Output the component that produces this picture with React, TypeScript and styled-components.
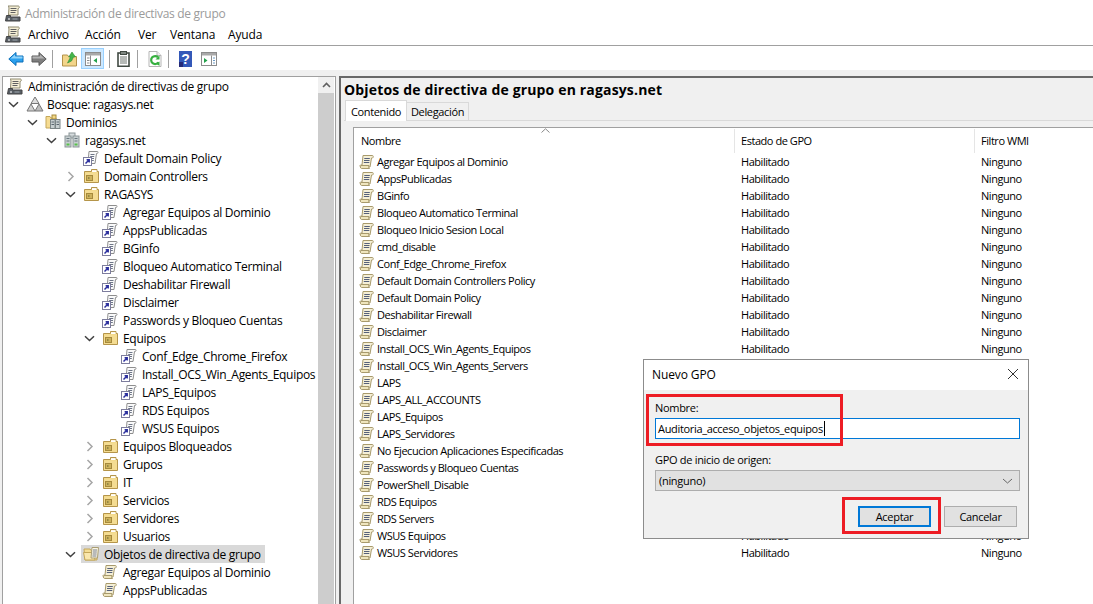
import React from "react";
import styled, { createGlobalStyle } from "styled-components";

const Global = createGlobalStyle`
  html, body { margin: 0; padding: 0; background: #fff; }
  * { box-sizing: border-box; }
`;

const Window = styled.div`
  position: relative;
  width: 1093px;
  height: 604px;
  overflow: hidden;
  display: flex;
  flex-direction: column;
  background: #fff;
  font-family: "Open Sans", "Noto Sans", sans-serif;
  color: #000;
`;
const TitleBar = styled.div`
  height: 24px;
  flex: none;
  display: flex;
  align-items: center;
  gap: 4px;
  padding: 2px 0 0 5px;
  font-size: 12px;
  letter-spacing: -0.31px;
  color: #9b9b9b;
`;
const MenuBar = styled.div`
  height: 22px;
  flex: none;
  display: flex;
  align-items: center;
  padding-left: 5px;
  font-size: 12px;
  letter-spacing: -0.15px;
  border-bottom: 1px solid #a0a0a0;
`;
const MenuIcon = styled.div`
  display: flex;
  margin-right: 7px;
`;
const MenuItem = styled.span<{ $w: number }>`
  width: ${(p) => p.$w}px;
`;
const ToolBar = styled.div`
  height: 24px;
  flex: none;
  display: flex;
  align-items: center;
  padding: 1px 0 0 4px;
`;
const ToolButton = styled.div<{ $active?: boolean }>`
  width: 23px;
  height: 21px;
  display: flex;
  align-items: center;
  justify-content: center;
  background: ${(p) => (p.$active ? "#cce8ff" : "transparent")};
  border: 1px solid ${(p) => (p.$active ? "#99d1ff" : "transparent")};
`;
const ToolSep = styled.div<{ $l: number; $r: number }>`
  width: 1px;
  height: 18px;
  background: #a0a0a0;
  margin: 0 ${(p) => p.$r}px 0 ${(p) => p.$l}px;
`;
const Workspace = styled.div`
  flex: 1;
  min-height: 0;
  display: flex;
  background: #f0f0f0;
  padding: 6px 0 0 2px;
`;
const TreePanel = styled.div`
  width: 334px;
  flex: none;
  display: flex;
  background: #fff;
  border-left: 1px solid #a0a0a0;
  border-top: 1px solid #a0a0a0;
  border-right: 1px solid #a0a0a0;
`;
const Tree = styled.div`
  flex: 1;
  min-width: 0;
  overflow: hidden;
`;
const TreeRow = styled.div<{ $level: number }>`
  height: 18px;
  display: flex;
  align-items: center;
  padding-left: ${(p) => 4 + p.$level * 19}px;
  font-size: 12px;
  letter-spacing: -0.3px;
  white-space: nowrap;
`;
const Chevron = styled.div`
  width: 19px;
  height: 18px;
  flex: none;
  display: flex;
  align-items: center;
  padding-left: 1px;
`;
const RowIcon = styled.div`
  width: 21px;
  height: 16px;
  flex: none;
  display: flex;
  align-items: center;
`;
const RowEntry = styled.div<{ $selected?: boolean }>`
  display: flex;
  align-items: center;
  height: 18px;
  margin-left: ${(p) => (p.$selected ? "-2px" : "0")};
  padding: ${(p) => (p.$selected ? "0 4px 0 2px" : "0")};
  background: ${(p) => (p.$selected ? "#d9d9d9" : "transparent")};
`;
const Scrollbar = styled.div`
  width: 16px;
  flex: none;
  margin-right: 1px;
  background: #cdcdcd;
`;
const ScrollUp = styled.div`
  height: 16px;
  background: #f0f0f0;
  display: flex;
  align-items: center;
  justify-content: center;
`;
const Splitter = styled.div`
  width: 3px;
  flex: none;
`;
const DetailPanel = styled.div`
  flex: 1;
  min-width: 0;
  display: flex;
  flex-direction: column;
  background: #f0f0f0;
  border-left: 2px solid #696969;
  border-top: 2px solid #696969;
  padding-left: 3px;
`;
const Heading = styled.div`
  height: 22px;
  flex: none;
  display: flex;
  align-items: center;
  font-size: 14px;
  font-weight: 700;
  letter-spacing: 0.16px;
  white-space: nowrap;
`;
const TabStrip = styled.div`
  height: 21px;
  flex: none;
  display: flex;
  align-items: flex-end;
  padding-left: 1px;
  border-bottom: 1px solid #d9d9d9;
  font-size: 11px;
  letter-spacing: -0.35px;
`;
const Tab = styled.div<{ $active?: boolean }>`
  height: ${(p) => (p.$active ? 21 : 19)}px;
  width: 62px;
  margin-bottom: -1px;
  display: flex;
  align-items: center;
  justify-content: center;
  background: ${(p) => (p.$active ? "#fff" : "#f0f0f0")};
  border: 1px solid #d9d9d9;
  border-bottom: ${(p) => (p.$active ? "0" : "1px solid #d9d9d9")};
  border-left: ${(p) => (p.$active ? "1px solid #d9d9d9" : "0")};
`;
const TabBody = styled.div`
  flex: 1;
  min-height: 0;
  padding: 6px 0 0 9px;
  background: #f0f0f0;
`;
const ListBox = styled.div`
  height: 100%;
  background: #fff;
  border-left: 1px solid #a0a0a0;
  border-top: 1px solid #a0a0a0;
  font-size: 11px;
  letter-spacing: -0.45px;
  overflow: hidden;
`;
const Columns = "380px 240px 1fr";
const HeaderRow = styled.div`
  position: relative;
  height: 25px;
  display: grid;
  grid-template-columns: ${Columns};
`;
const HeaderCell = styled.div<{ $sep?: boolean }>`
  display: flex;
  align-items: flex-end;
  padding: 0 0 5px ${(p) => (p.$sep ? 6 : 6)}px;
  height: 24px;
  margin-top: 1px;
  border-left: 1px solid ${(p) => (p.$sep ? "#e5e5e5" : "transparent")};
`;
const SortMark = styled.div`
  position: absolute;
  left: 187px;
  top: 0;
  display: flex;
`;
const ListRow = styled.div`
  height: 17px;
  display: grid;
  grid-template-columns: ${Columns};
  align-items: center;
  white-space: nowrap;
`;
const NameCell = styled.div`
  display: flex;
  align-items: center;
  padding-left: 5px;
  gap: 2px;
`;
const Cell = styled.div`
  padding-left: 7px;
`;
const Dialog = styled.div`
  position: absolute;
  left: 643px;
  top: 359px;
  width: 386px;
  height: 180px;
  background: #f0f0f0;
  border: 1px solid #8c8c8c;
  display: flex;
  flex-direction: column;
  font-size: 11px;
  letter-spacing: -0.3px;
`;
const DialogTitle = styled.div`
  height: 30px;
  flex: none;
  background: #fff;
  display: flex;
  align-items: center;
  justify-content: space-between;
  padding: 0 9px 2px 8px;
  font-size: 12px;
  letter-spacing: -0.1px;
`;
const DialogBody = styled.div`
  flex: 1;
  padding: 9px 8px 0 11px;
  display: flex;
  flex-direction: column;
`;
const FieldLabel = styled.div<{ $gap?: number }>`
  height: 16px;
  margin-top: ${(p) => p.$gap ?? 0}px;
  display: flex;
  align-items: center;
`;
const NameInput = styled.div`
  height: 21px;
  margin-top: 3px;
  background: #fff;
  border: 1px solid #0078d7;
  display: flex;
  align-items: center;
  padding-left: 2px;
  letter-spacing: -0.33px;
`;
const Caret = styled.span`
  width: 1px;
  height: 15px;
  background: #000;
  margin-left: 1px;
`;
const Select = styled.div`
  height: 21px;
  margin-top: 3px;
  background: #e1e1e1;
  border: 1px solid #adadad;
  display: flex;
  align-items: center;
  justify-content: space-between;
  padding: 0 6px 0 3px;
`;
const ButtonRow = styled.div`
  display: flex;
  justify-content: flex-end;
  gap: 13px;
  margin-top: 15px;
  padding-right: 3px;
`;
const Button = styled.div<{ $primary?: boolean }>`
  width: 73px;
  height: 21px;
  background: #e1e1e1;
  border: ${(p) => (p.$primary ? "2px solid #0078d7" : "1px solid #adadad")};
  display: flex;
  align-items: center;
  justify-content: center;
`;
const Highlight = styled.div<{ $l: number; $t: number; $w: number; $h: number }>`
  position: absolute;
  left: ${(p) => p.$l}px;
  top: ${(p) => p.$t}px;
  width: ${(p) => p.$w}px;
  height: ${(p) => p.$h}px;
  border: 3px solid #ed1c24;
  pointer-events: none;
`;

const ChevronDown = () => (
  <svg width="11" height="7" viewBox="0 0 11 7"><path d="M1 1.2 5.5 5.5 10 1.2" fill="none" stroke="#404040" strokeWidth="1.5" /></svg>
);
const ChevronRight = () => (
  <svg width="11" height="11" viewBox="0 0 11 11"><path d="M3.5 1 8 5.5 3.5 10" fill="none" stroke="#a6a6a6" strokeWidth="1.5" /></svg>
);

const ScrollIcon = () => (
  <svg width="16" height="16" viewBox="0 0 16 16">
    <path d="M4 1.5h9.5c1 0 1 2 0 2.5H12.5L11 13H2.5c-1.5 0-2-1.5-1-2H3Z" fill="#f5efd6" stroke="#a89a6c" />
    <path d="M2 11.5h8c-.5 1-.5 2.5.5 3H2.5c-1.5-.5-1.5-2.5-.5-3Z" fill="#efe5bd" stroke="#a89a6c" />
    <path d="M5.3 4.5h5.5M5 6.5h5.5M4.8 8.5h5.5" stroke="#55607a" strokeWidth="1" />
  </svg>
);
const LinkIcon = () => (
  <svg width="16" height="16" viewBox="0 0 16 16">
    <path d="M6 1.5h8.5c.8 0 .6 1.8-.2 2H13.5L12 13.5H5Z" fill="#fafafa" stroke="#8e8e8e" />
    <path d="M7.5 4.5h4M7.2 6.5h4M7 8.5h4M6.8 10.5h4" stroke="#6e7687" />
    <rect x="0.5" y="7.5" width="8" height="8" fill="#fff" stroke="#7d7d9d" />
    <path d="M2.5 13.5 6 10M3.6 9.8H6.2V12.4" fill="none" stroke="#2b2f9e" strokeWidth="1.5" />
  </svg>
);
const OuIcon = () => (
  <svg width="16" height="16" viewBox="0 0 16 16">
    <path d="M1.5 3.5h7V1.5h5.5v2h1.5v11h-14Z" fill="#f2d887" stroke="#b5954a" />
    <path d="M9 2.2h4.5v1.8H9Z" fill="#fff" />
    <rect x="2" y="4.5" width="13" height="9.5" fill="#f4dc92" />
    <rect x="3.5" y="7.5" width="6" height="5" fill="#cdb25c" stroke="#a68a3c" />
    <path d="M5 10h1.5" stroke="#5d5d2d" />
  </svg>
);
const GpoFolderIcon = () => (
  <svg width="17" height="16" viewBox="0 0 17 16">
    <path d="M1 3h6l1 1.5h6V14H2Z" fill="#f5dd94" stroke="#c4a75a" />
    <path d="M.5 6.5h10L12 14H2Z" fill="#fae7ad" stroke="#c4a75a" />
    <path d="M9 1.5h6.5L14.5 12H8Z" fill="#fbf6e1" stroke="#a99d74" />
    <path d="M10 4h4M9.8 6h4M9.6 8h4M9.4 10h4" stroke="#767f93" />
  </svg>
);
const ForestIcon = () => (
  <svg width="18" height="16" viewBox="0 0 18 16">
    <path d="M9 1 13 7.5H5Z" fill="#dedede" stroke="#777" />
    <path d="M5 8 9 15H1Z" fill="#d0d0d0" stroke="#777" />
    <path d="M13 8 17 15H9Z" fill="#bdbdbd" stroke="#777" />
  </svg>
);
const Building = ({ x }: { x: number }) => (
  <g>
    <rect x={x} y="4" width="6" height="11" fill="#c7cfd1" stroke="#8b9597" />
    <path d={`M${x + 1.5} 6.5h3M${x + 1.5} 9h3`} stroke="#6b7880" />
    <rect x={x + 1.5} y="11.5" width="3" height="2" fill="#59c24b" />
  </g>
);
const DomainIcon = () => (
  <svg width="16" height="16" viewBox="0 0 16 16">
    <rect x="5" y="1" width="6" height="5" fill="#d6dcde" stroke="#8b9597" />
    <Building x={1} />
    <Building x={9} />
  </svg>
);
const DomainFolderIcon = () => (
  <svg width="16" height="16" viewBox="0 0 16 16">
    <path d="M1 2.5h4l1 1.5h5v10H1Z" fill="#f6dc92" stroke="#c4a75a" />
    <rect x="7" y="1" width="4" height="4" fill="#f2d887" stroke="#a68a3c" />
    <rect x="5.5" y="5.5" width="4.5" height="9" fill="#c7cfd1" stroke="#7b8587" />
    <rect x="10.5" y="5.5" width="4.5" height="9" fill="#c7cfd1" stroke="#7b8587" />
    <path d="M6.5 8h2.5M11.5 8h2.5M6.5 10.5h2.5M11.5 10.5h2.5" stroke="#5a6670" />
  </svg>
);
const ConsoleIcon = () => (
  <svg width="16" height="17" viewBox="0 0 16 17">
    <path d="M3 1h10.5c1 0 1 2.2 0 2.5H13V10H3.5L4 3C4 2 3.5 1.2 3 1Z" fill="#f5efd6" stroke="#8f8a70" />
    <path d="M5.5 3.5h6M5.5 5.5h6M5.5 7.5h5" stroke="#606060" />
    <path d="M1.5 10.5h4V12H15v4H.5Z" fill="#585f66" stroke="#444" />
    <path d="M3 14h2" stroke="#fff" />
    <path d="M7.5 14h5" stroke="#9ea6ab" />
  </svg>
);
const BackArrow = () => (
  <svg width="16" height="14" viewBox="0 0 16 14">
    <path d="M8 .5.8 7 8 13.5V10h7V4H8Z" fill="#2aa0ee" stroke="#0d6fb8" />
    <path d="M7 2.5 2.5 6.5H14.5V4.5H7Z" fill="#8fd3fa" />
  </svg>
);
const ForwardArrow = () => (
  <svg width="16" height="14" viewBox="0 0 16 14">
    <path d="M8 .5 15.2 7 8 13.5V10H1V4h7Z" fill="#7f7f7f" stroke="#5a5a5a" />
    <path d="M9 2.5 13.5 6.5H1.5V4.5H9Z" fill="#b4b4b4" />
  </svg>
);
const UpFolder = () => (
  <svg width="15" height="16" viewBox="0 0 15 16">
    <path d="M.5 4h5l1 1.5h8V15H.5Z" fill="#f3d58a" stroke="#b4934a" />
    <path d="M5.5 12 8.5 6H6.7L10 1l3.5 5h-2L9.5 10Z" fill="#45b64a" stroke="#2c8c35" strokeWidth=".6" />
  </svg>
);
const PaneIcon = ({ flip }: { flip?: boolean }) => (
  <svg width="16" height="14" viewBox="0 0 16 14">
    <rect x=".5" y=".5" width="15" height="13" fill="#fff" stroke="#8c8c8c" />
    <rect x="1" y="1" width="14" height="2.5" fill="#a9a9a9" />
    {flip ? (
      <>
        <path d="M3 6v5l3.5-2.5Z" fill="#22a14a" />
        <path d="M10.5 3.5v10" stroke="#8c8c8c" />
        <path d="M12 6h2M12 8.5h2M12 11h2" stroke="#6a9ac4" />
      </>
    ) : (
      <>
        <path d="M2 6h2.5M2 8.5h2.5M2 11h2.5" stroke="#8c8c8c" />
        <path d="M5.5 3.5v10" stroke="#8c8c8c" />
        <path d="M12 6v5L8.5 8.5Z" fill="#22a14a" />
      </>
    )}
  </svg>
);
const Clipboard = () => (
  <svg width="13" height="16" viewBox="0 0 13 16">
    <rect x="1" y="2" width="11" height="13.3" fill="#fff" stroke="#414a43" strokeWidth="1.6" />
    <rect x="3.5" y=".5" width="6" height="3" fill="#7f8781" stroke="#414a43" />
    <path d="M3 6h7M3 8h7M3 10h7M3 12h7" stroke="#6f7670" />
  </svg>
);
const RefreshIcon = () => (
  <svg width="14" height="16" viewBox="0 0 14 16">
    <path d="M1 .5h8l4 4v11H1Z" fill="#fff" stroke="#b5b5b5" />
    <path d="M9 .5v4h4" fill="#eee" stroke="#b5b5b5" />
    <path d="M10.4 11.4a4 4 0 1 1-.4-5.2" fill="none" stroke="#36b03f" strokeWidth="2.2" />
    <path d="M11.5 4.5v4h-4Z" fill="#36b03f" />
    <path d="M8 12.5l3.5 2.5v-4.5Z" fill="#36b03f" />
  </svg>
);
const HelpIcon = () => (
  <svg width="14" height="16" viewBox="0 0 14 16">
    <rect x="0" y="0" width="13" height="16" fill="#3358b8" />
    <rect x="0" y="11" width="4" height="5" fill="#252a78" />
    <text x="6.5" y="13" textAnchor="middle" fontSize="14" fontWeight="700" fontFamily="Liberation Sans, sans-serif" fill="#fff">?</text>
  </svg>
);
const CloseIcon = () => (
  <svg width="12" height="12" viewBox="0 0 12 12"><path d="M1 1 11 11M11 1 1 11" stroke="#333" strokeWidth="1" /></svg>
);

type Kind = "console" | "forest" | "domfolder" | "domain" | "link" | "ou" | "gpofolder" | "scroll";
const icons: Record<Kind, React.ReactNode> = {
  console: <ConsoleIcon />,
  forest: <ForestIcon />,
  domfolder: <DomainFolderIcon />,
  domain: <DomainIcon />,
  link: <LinkIcon />,
  ou: <OuIcon />,
  gpofolder: <GpoFolderIcon />,
  scroll: <ScrollIcon />,
};

type Node = { level: number; kind: Kind; label: string; arrow?: "open" | "closed"; selected?: boolean };
const tree: Node[] = [
  { level: 0, kind: "forest", label: "Bosque: ragasys.net", arrow: "open" },
  { level: 1, kind: "domfolder", label: "Dominios", arrow: "open" },
  { level: 2, kind: "domain", label: "ragasys.net", arrow: "open" },
  { level: 3, kind: "link", label: "Default Domain Policy" },
  { level: 3, kind: "ou", label: "Domain Controllers", arrow: "closed" },
  { level: 3, kind: "ou", label: "RAGASYS", arrow: "open" },
  { level: 4, kind: "link", label: "Agregar Equipos al Dominio" },
  { level: 4, kind: "link", label: "AppsPublicadas" },
  { level: 4, kind: "link", label: "BGinfo" },
  { level: 4, kind: "link", label: "Bloqueo Automatico Terminal" },
  { level: 4, kind: "link", label: "Deshabilitar Firewall" },
  { level: 4, kind: "link", label: "Disclaimer" },
  { level: 4, kind: "link", label: "Passwords y Bloqueo Cuentas" },
  { level: 4, kind: "ou", label: "Equipos", arrow: "open" },
  { level: 5, kind: "link", label: "Conf_Edge_Chrome_Firefox" },
  { level: 5, kind: "link", label: "Install_OCS_Win_Agents_Equipos" },
  { level: 5, kind: "link", label: "LAPS_Equipos" },
  { level: 5, kind: "link", label: "RDS Equipos" },
  { level: 5, kind: "link", label: "WSUS Equipos" },
  { level: 4, kind: "ou", label: "Equipos Bloqueados", arrow: "closed" },
  { level: 4, kind: "ou", label: "Grupos", arrow: "closed" },
  { level: 4, kind: "ou", label: "IT", arrow: "closed" },
  { level: 4, kind: "ou", label: "Servicios", arrow: "closed" },
  { level: 4, kind: "ou", label: "Servidores", arrow: "closed" },
  { level: 4, kind: "ou", label: "Usuarios", arrow: "closed" },
  { level: 3, kind: "gpofolder", label: "Objetos de directiva de grupo", arrow: "open", selected: true },
  { level: 4, kind: "scroll", label: "Agregar Equipos al Dominio" },
  { level: 4, kind: "scroll", label: "AppsPublicadas" },
];

const gpos = [
  "Agregar Equipos al Dominio", "AppsPublicadas", "BGinfo", "Bloqueo Automatico Terminal",
  "Bloqueo Inicio Sesion Local", "cmd_disable", "Conf_Edge_Chrome_Firefox",
  "Default Domain Controllers Policy", "Default Domain Policy", "Deshabilitar Firewall", "Disclaimer",
  "Install_OCS_Win_Agents_Equipos", "Install_OCS_Win_Agents_Servers", "LAPS", "LAPS_ALL_ACCOUNTS",
  "LAPS_Equipos", "LAPS_Servidores", "No Ejecucion Aplicaciones Especificadas",
  "Passwords y Bloqueo Cuentas", "PowerShell_Disable", "RDS Equipos", "RDS Servers", "WSUS Equipos",
  "WSUS Servidores",
];
// Rows whose status and filter cells sit fully behind the dialog.
const hiddenByDialog = (i: number) => i >= 12 && i <= 21;

export default function App() {
  return (
    <Window>
      <Global />
      <TitleBar>
        <ConsoleIcon />
        <span>Administración de directivas de grupo</span>
      </TitleBar>
      <MenuBar>
        <MenuIcon><ConsoleIcon /></MenuIcon>
        <MenuItem $w={57}>Archivo</MenuItem>
        <MenuItem $w={53}>Acción</MenuItem>
        <MenuItem $w={32}>Ver</MenuItem>
        <MenuItem $w={58}>Ventana</MenuItem>
        <MenuItem $w={40}>Ayuda</MenuItem>
      </MenuBar>
      <ToolBar>
        <ToolButton><BackArrow /></ToolButton>
        <ToolButton><ForwardArrow /></ToolButton>
        <ToolSep $l={2} $r={5} />
        <ToolButton><UpFolder /></ToolButton>
        <ToolButton $active><PaneIcon /></ToolButton>
        <ToolSep $l={5} $r={2} />
        <ToolButton><Clipboard /></ToolButton>
        <ToolSep $l={2} $r={5} />
        <ToolButton><RefreshIcon /></ToolButton>
        <ToolSep $l={2} $r={5} />
        <ToolButton><HelpIcon /></ToolButton>
        <ToolButton><PaneIcon flip /></ToolButton>
      </ToolBar>
      <Workspace>
        <TreePanel>
          <Tree>
            <TreeRow $level={0}>
              <RowIcon><ConsoleIcon /></RowIcon>
              <span>Administración de directivas de grupo</span>
            </TreeRow>
            {tree.map((n, i) => (
              <TreeRow key={i} $level={n.level}>
                <Chevron>
                  {n.arrow === "open" && <ChevronDown />}
                  {n.arrow === "closed" && <ChevronRight />}
                </Chevron>
                <RowEntry $selected={n.selected}>
                  <RowIcon>{icons[n.kind]}</RowIcon>
                  <span>{n.label}</span>
                </RowEntry>
              </TreeRow>
            ))}
          </Tree>
          <Scrollbar>
            <ScrollUp>
              <svg width="9" height="6" viewBox="0 0 9 6"><path d="M1 5 4.5 1.5 8 5" fill="none" stroke="#606060" strokeWidth="1.6" /></svg>
            </ScrollUp>
          </Scrollbar>
        </TreePanel>
        <Splitter />
        <DetailPanel>
          <Heading>Objetos de directiva de grupo en ragasys.net</Heading>
          <TabStrip>
            <Tab $active>Contenido</Tab>
            <Tab>Delegación</Tab>
          </TabStrip>
          <TabBody>
            <ListBox>
              <HeaderRow>
                <HeaderCell>Nombre</HeaderCell>
                <HeaderCell $sep>Estado de GPO</HeaderCell>
                <HeaderCell $sep>Filtro WMI</HeaderCell>
                <SortMark>
                  <svg width="9" height="5" viewBox="0 0 9 5"><path d="M.5 4.5 4.5 .8 8.5 4.5" fill="none" stroke="#8a8a8a" /></svg>
                </SortMark>
              </HeaderRow>
              {gpos.map((g, i) => (
                <ListRow key={g}>
                  <NameCell><ScrollIcon /><span>{g}</span></NameCell>
                  {!hiddenByDialog(i) && <Cell>Habilitado</Cell>}
                  {!hiddenByDialog(i) && <Cell>Ninguno</Cell>}
                </ListRow>
              ))}
            </ListBox>
          </TabBody>
        </DetailPanel>
      </Workspace>
      <Dialog>
        <DialogTitle>
          <span>Nuevo GPO</span>
          <CloseIcon />
        </DialogTitle>
        <DialogBody>
          <FieldLabel>Nombre:</FieldLabel>
          <NameInput>Auditoria_acceso_objetos_equipos<Caret /></NameInput>
          <FieldLabel $gap={12}>GPO de inicio de origen:</FieldLabel>
          <Select>
            <span>(ninguno)</span>
            <svg width="11" height="6" viewBox="0 0 11 6"><path d="M1 1 5.5 5 10 1" fill="none" stroke="#666" /></svg>
          </Select>
          <ButtonRow>
            <Button $primary>Aceptar</Button>
            <Button>Cancelar</Button>
          </ButtonRow>
        </DialogBody>
      </Dialog>
      <Highlight $l={646} $t={394} $w={197} $h={52} />
      <Highlight $l={842} $t={497} $w={99} $h={37} />
    </Window>
  );
}
